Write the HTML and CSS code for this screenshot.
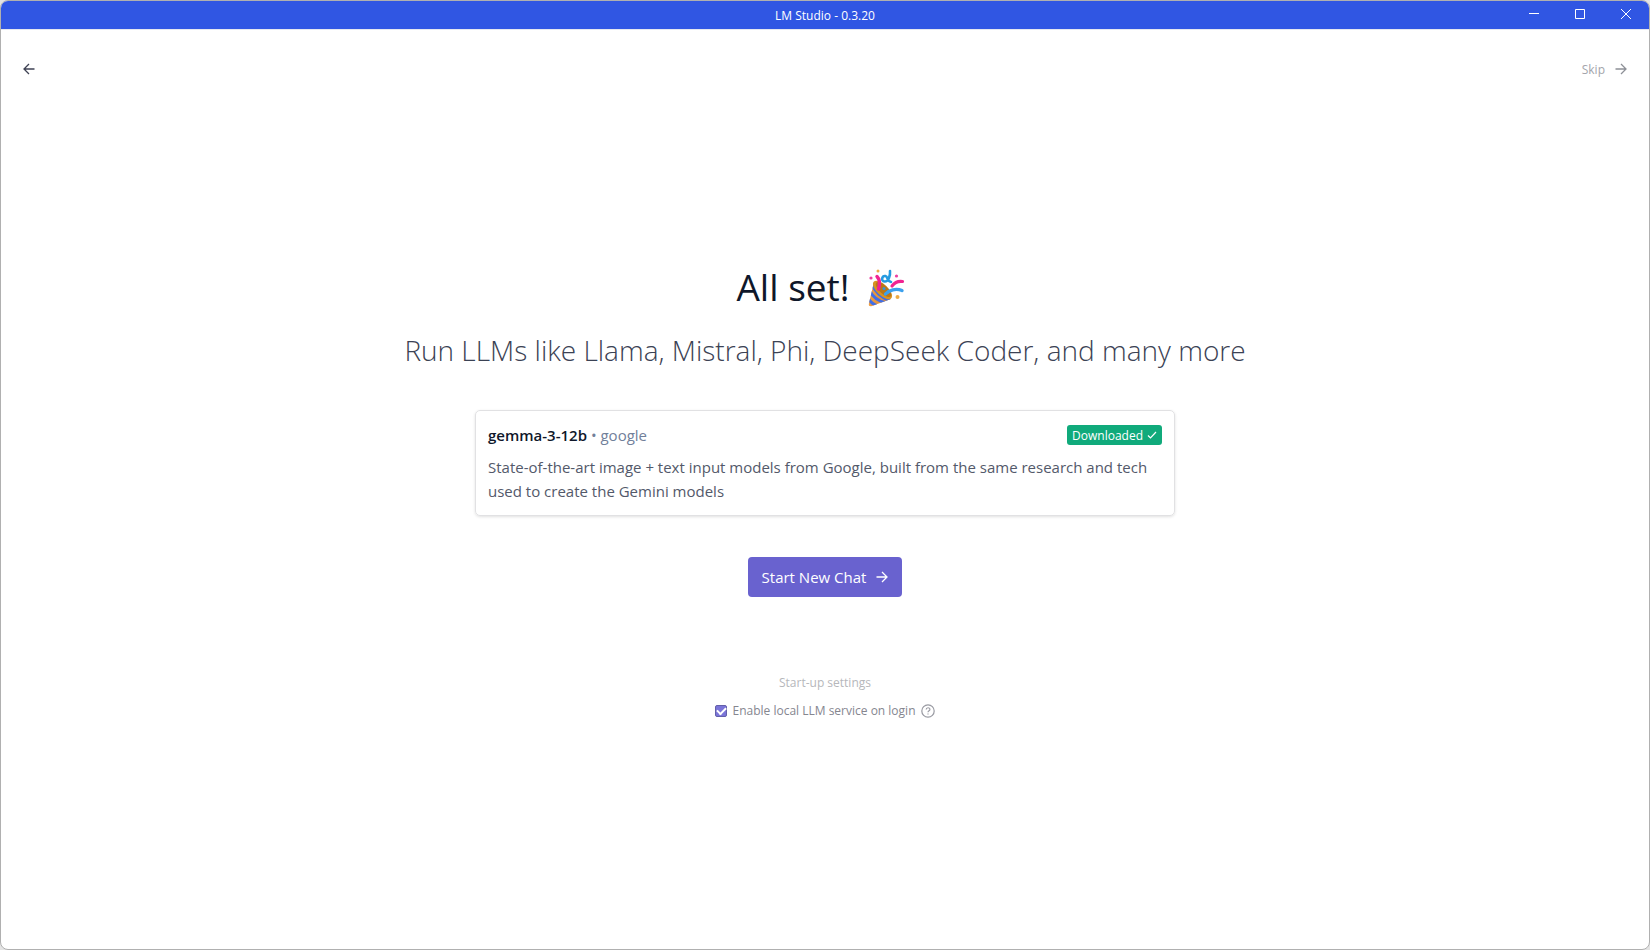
FILE: index.html
```html
<!DOCTYPE html>
<html lang="en">
<head>
<meta charset="utf-8">
<title>LM Studio - 0.3.20</title>
<link rel="stylesheet" href="styles.css">
</head>
<body>
<div class="window">
  <header class="titlebar">
    <span class="titlebar-text">LM Studio - 0.3.20</span>
    <div class="window-controls">
      <button class="window-button" aria-label="Minimize"><svg width="10" height="10" viewBox="0 0 10 10"><path d="M0 4.5h10"/></svg></button>
      <button class="window-button" aria-label="Maximize"><svg width="10" height="10" viewBox="0 0 10 10"><path d="M.5.5h9v9h-9z"/></svg></button>
      <button class="window-button" aria-label="Close"><svg width="10" height="10" viewBox="0 0 10 10"><path d="M0 0l10 10M10 0L0 10"/></svg></button>
    </div>
  </header>
  <nav class="nav">
    <button class="nav-button back" aria-label="Back"><svg class="arrow" width="12" height="12" viewBox="0 0 12 12"><path d="M11.5 6H1M6 1L1 6l5 5"/></svg></button>
    <button class="nav-button skip">Skip <svg class="arrow" width="12" height="12" viewBox="0 0 12 12"><path d="M.5 6H11M6 1l5 5-5 5"/></svg></button>
  </nav>
  <main class="content">
    <h1 class="heading">
      <span>All set!</span>
      <svg class="party" width="38" height="38" viewBox="0 0 38 38" role="img" aria-label="Party popper">
        <defs>
          <clipPath id="cone"><path d="M6 13C11 17 18 24 23 30L4 37Q0 38 1 34Z"/></clipPath>
          <linearGradient id="gold" x1="0" y1="0" x2="1" y2="0"><stop offset="0" stop-color="#ef9f45"/><stop offset="1" stop-color="#d18431"/></linearGradient>
        </defs>
        <g clip-path="url(#cone)">
          <path d="M0 10h26v28H0z" fill="url(#gold)"/>
          <path d="M4 15Q8 26 22 32M2 22Q6 31 18 34M0 29Q4 36 11 37" fill="none" stroke="#3f6ee8" stroke-width="3"/>
        </g>
        <ellipse cx="14.500" cy="21" rx="12" ry="5.500" transform="rotate(43 14.500 21)" fill="#d79321"/>
        <ellipse cx="15.500" cy="20.500" rx="10" ry="4" transform="rotate(43 15.500 20.500)" fill="#b97718"/>
        <path d="M10.500 20C12 15 11.500 10 9 7.500" fill="none" stroke="#f12491" stroke-width="3.400" stroke-linecap="round"/>
        <path d="M17.500 25C21 21 28 19 34 21.500" fill="none" stroke="#3ba0ed" stroke-width="3.400" stroke-linecap="round"/>
        <path d="M24 17C27 13 31 12 34.500 12.500" fill="none" stroke="#f12491" stroke-width="3.200" stroke-linecap="round"/>
        <path d="M22 2C22.500 6 20.500 13 16.500 12.500C12.500 12 14 6.500 17.500 7C20 7.500 19 12 23 13" fill="none" stroke="#269be0" stroke-width="2.600" stroke-linecap="round"/>
        <g fill="#ee3fa0"><circle cx="3" cy="9" r="1.600"/><circle cx="28.500" cy="7" r="1.600"/></g>
        <g fill="#edaa43"><circle cx="10" cy="2" r="1.500"/><circle cx="29.500" cy="28" r="2"/></g>
        <circle cx="16" cy="19.500" r="1.500" fill="#3795d9"/>
      </svg>
    </h1>
    <p class="subtitle">Run LLMs like Llama, Mistral, Phi, DeepSeek Coder, and many more</p>
    <section class="card">
      <div class="card-head">
        <div class="model"><strong class="model-name">gemma-3-12b</strong> <span class="model-owner">• google</span></div>
        <span class="badge">Downloaded <svg width="10" height="10" viewBox="0 0 10 10"><path d="M1 5.500l2.500 2.500L9 2"/></svg></span>
      </div>
      <p class="description">State-of-the-art image + text input models from Google, built from the same research and tech used to create the Gemini models</p>
    </section>
    <button class="start">Start New Chat <svg class="arrow" width="12" height="12" viewBox="0 0 12 12"><path d="M.5 6H11M6 1l5 5-5 5"/></svg></button>
    <section class="settings">
      <h2 class="settings-title">Start-up settings</h2>
      <div class="setting">
        <input class="check" type="checkbox" id="login-service" checked>
        <label for="login-service">Enable local LLM service on login</label>
        <svg class="help" width="14" height="14" viewBox="0 0 14 14"><circle cx="7" cy="7" r="6.200"/><path d="M5.200 5.600C5.200 3.100 8.900 3.200 8.900 5.400C8.900 6.800 7 6.700 7 8.300M7 9.500v1"/></svg>
      </div>
    </section>
  </main>
</div>
</body>
</html>
```

FILE: styles.css
```css
* { box-sizing: border-box; }
body {
  margin: 0;
  background: #e4e4e4;
  font-family: "Open Sans", "Noto Sans", sans-serif;
  font-size: 16px;
  color: #0f172a;
}
button { font: inherit; border: 0; background: none; padding: 0; }
h1, h2, p { margin: 0; }
svg { display: block; flex: none; }
.window {
  min-height: 100vh;
  display: flex;
  flex-direction: column;
  border: 1px solid #b0b0b0;
  border-radius: 8px;
  background: #fff;
  overflow: hidden;
}
.titlebar {
  position: relative;
  display: flex;
  align-items: center;
  justify-content: center;
  height: 28px;
  background: #3056e3;
  color: #fff;
  font-size: 12px;
}
.window-controls {
  position: absolute;
  top: 0;
  right: 0;
  height: 100%;
  display: flex;
}
.window-button {
  width: 46px;
  display: flex;
  align-items: center;
  justify-content: center;
  padding-bottom: 2px;
}
.window-button svg { fill: none; stroke: #fff; stroke-width: 1; }
.nav {
  display: flex;
  justify-content: space-between;
  align-items: center;
  border-top: 1px solid #e5e7f0;
  padding: 27px 22px 0;
  height: 52px;
}
.nav-button { display: flex; align-items: center; gap: 10px; }
.back { color: #3f4254; }
.skip { color: #a3a5ab; font-size: 12px; }
.skip .arrow { color: #8d9097; }
.arrow { fill: none; stroke: currentColor; stroke-width: 1.3; }
.content {
  flex: 1;
  display: flex;
  flex-direction: column;
  align-items: center;
  padding: 179px 24px 24px;
}
.heading {
  display: flex;
  align-items: center;
  gap: 18px;
  height: 56px;
  padding-right: 8px;
  font-size: 37px;
  line-height: 52px;
  font-weight: 400;
}
.heading span { padding-bottom: 2px; }
.subtitle {
  margin-top: 16px;
  font-size: 28px;
  line-height: 36px;
  font-weight: 300;
  color: #3b4254;
}
.card {
  width: 100%;
  max-width: 700px;
  margin-top: 42px;
  padding: 12px;
  border: 1px solid #e1e1e3;
  border-radius: 5px;
  box-shadow: 0 1px 3px #0000001f;
}
.card-head {
  display: flex;
  align-items: center;
  justify-content: space-between;
  height: 24px;
  font-size: 15px;
}
.model-name { font-weight: 600; }
.model-owner { color: #71809a; }
.badge {
  display: flex;
  align-items: center;
  gap: 4px;
  height: 20px;
  padding: 0 5px;
  border-radius: 3px;
  background: #10aa7b;
  color: #fff;
  font-size: 12px;
}
.badge svg { fill: none; stroke: #fff; stroke-width: 1.2; }
.description {
  margin-top: 8px;
  line-height: 24px;
  font-size: 15px;
  color: #53596a;
}
.start {
  display: flex;
  align-items: center;
  gap: 10px;
  height: 40px;
  margin-top: 41px;
  padding: 0 14px;
  border-radius: 4px;
  background: #6962cf;
  color: #fff;
  font-size: 15px;
}
.settings {
  display: flex;
  flex-direction: column;
  align-items: center;
  gap: 12px;
  margin-top: 78px;
  font-size: 12px;
  line-height: 16px;
}
.settings-title { font-size: 12px; font-weight: 400; color: #b6b7bb; }
.setting { display: flex; align-items: center; gap: 5px; color: #85868f; }
.check {
  appearance: none;
  width: 12px;
  height: 12px;
  margin: 0;
  border: 1px solid #6460aa;
  border-radius: 2px;
  background: #7b75d8;
  display: grid;
  place-items: center;
}
.check:checked::before {
  content: "";
  width: 7px;
  height: 4px;
  border-left: 2px solid #fff;
  border-bottom: 2px solid #fff;
  transform: translateY(-1px) rotate(-45deg);
}
.help { fill: none; stroke: #999aa2; stroke-width: 1.2; }
```
